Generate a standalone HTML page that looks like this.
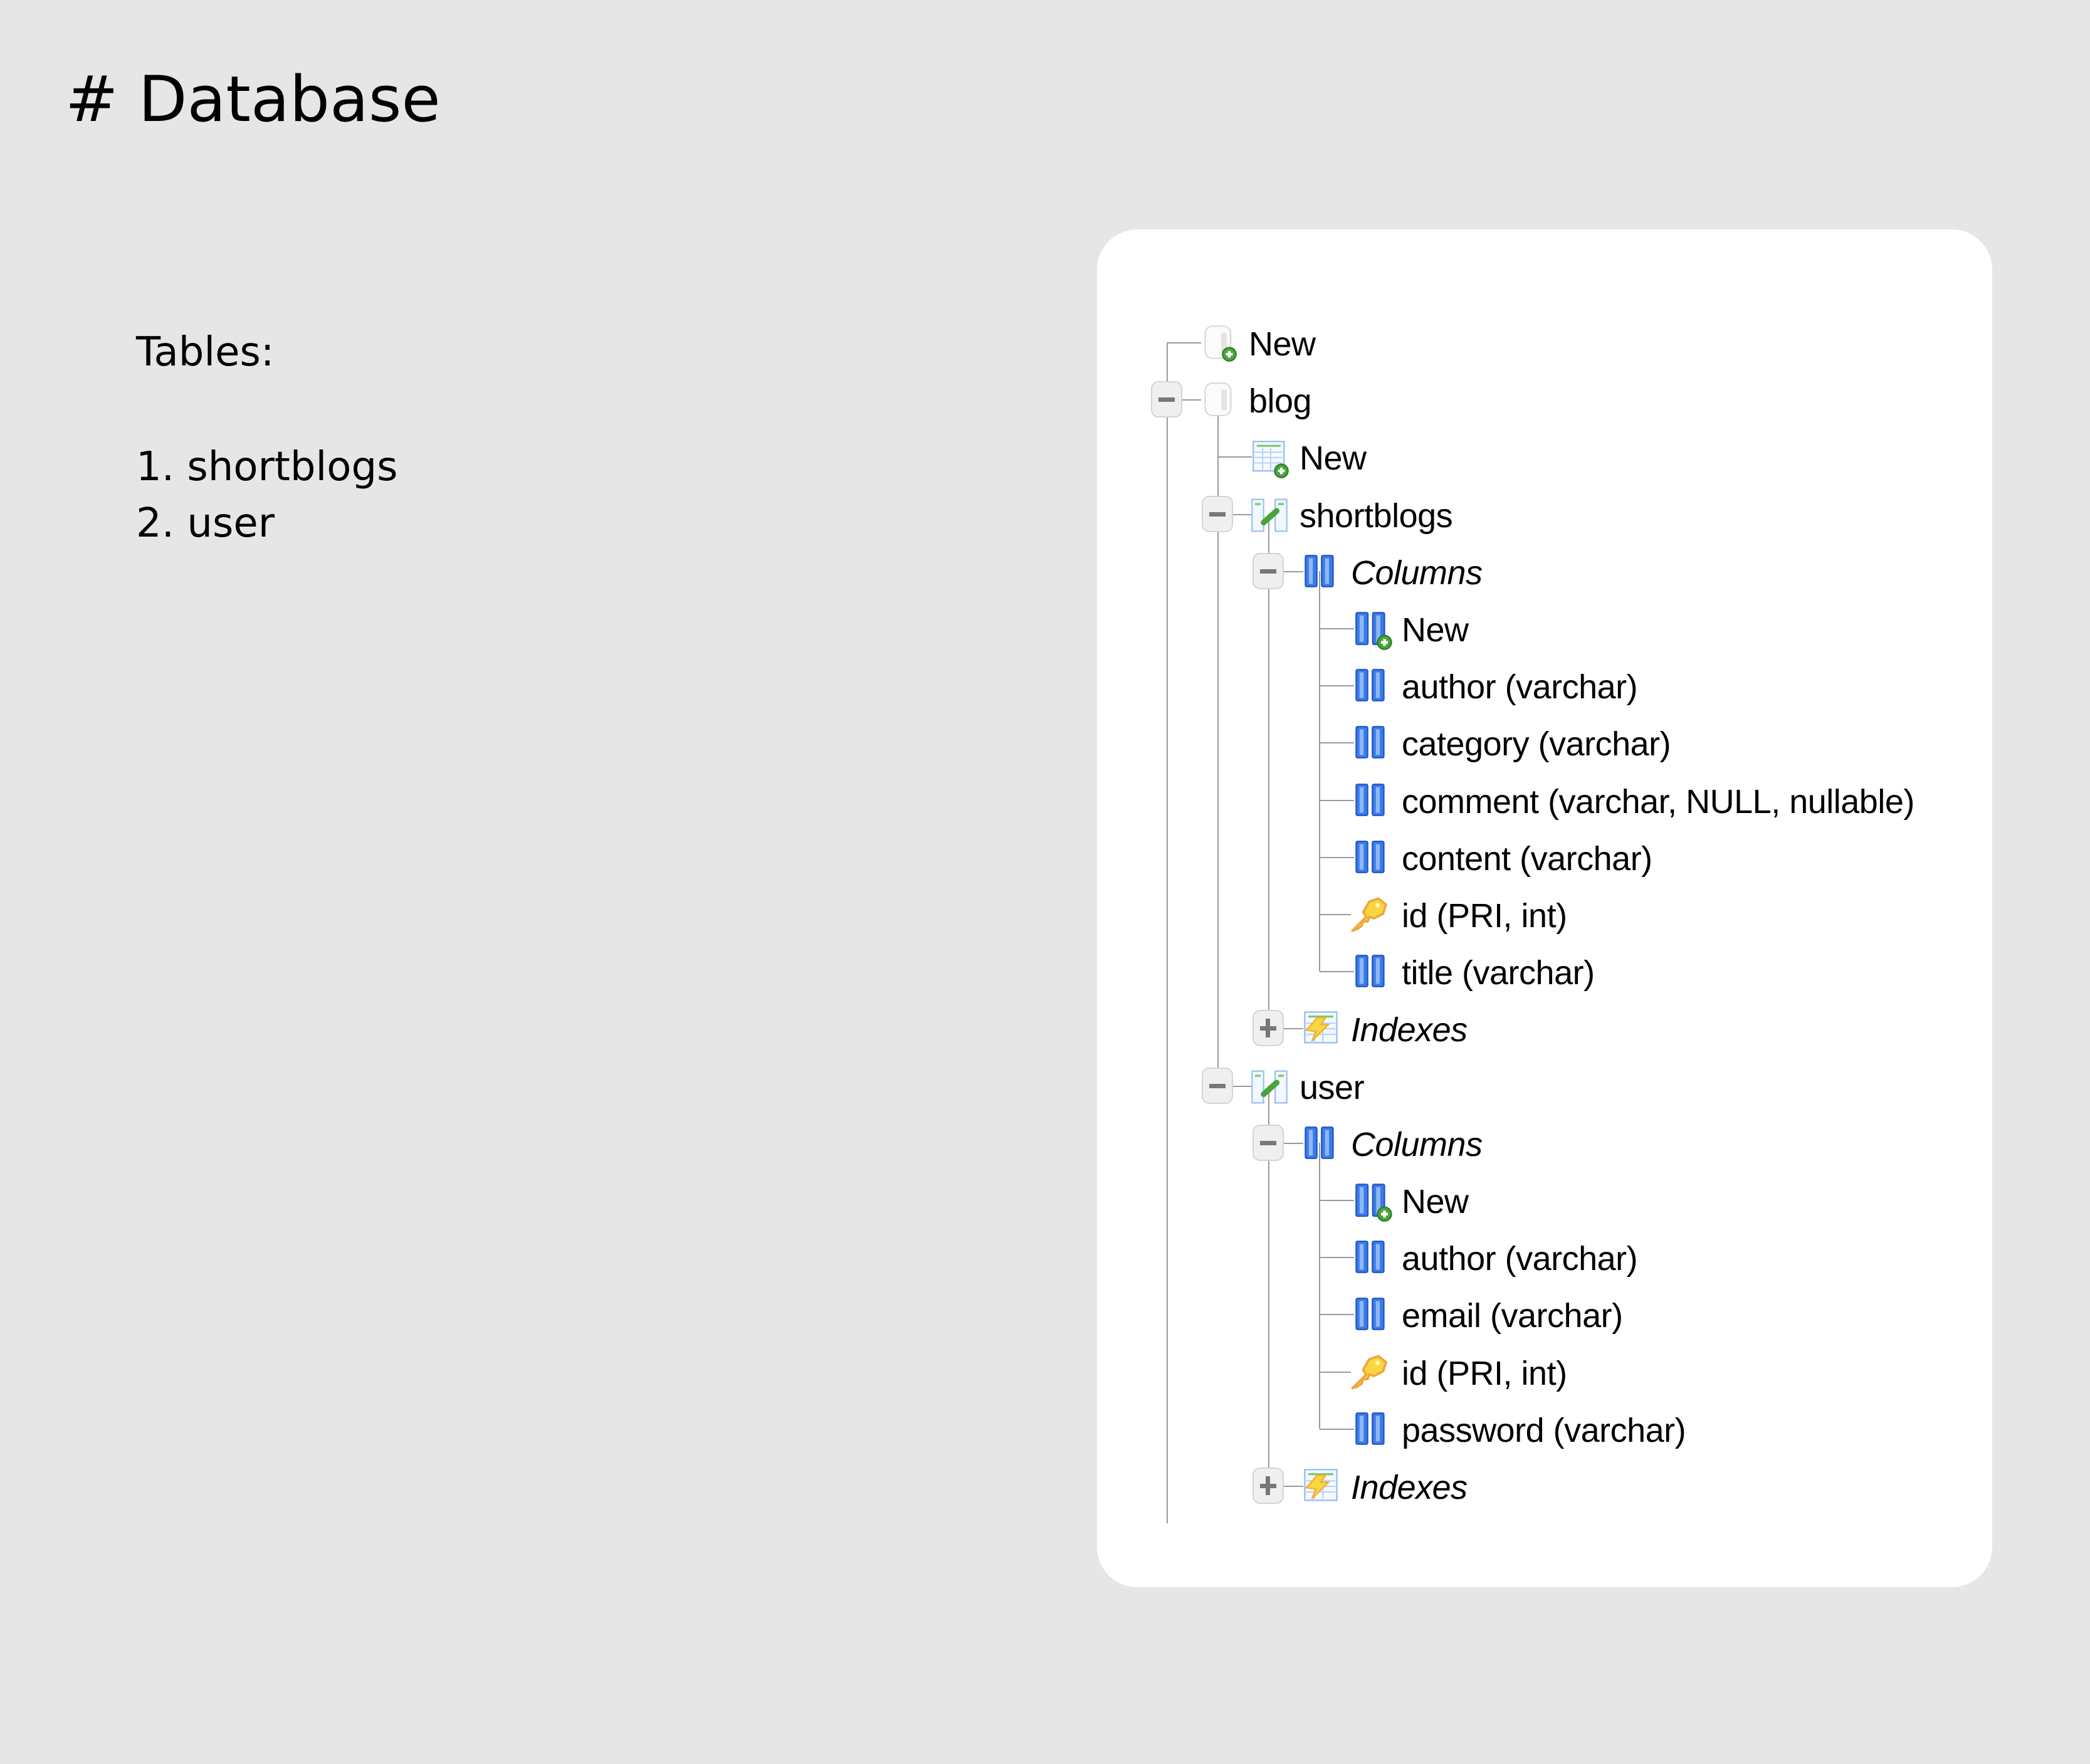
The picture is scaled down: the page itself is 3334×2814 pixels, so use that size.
<!DOCTYPE html>
<html><head><meta charset="utf-8">
<style>
html,body{margin:0;padding:0}
body{width:3334px;height:2814px;background:#e6e6e6;position:relative;overflow:hidden;font-family:"DejaVu Sans",sans-serif;color:#000}
.h1{position:absolute;left:104px;top:108px;font-size:101px;line-height:1;white-space:nowrap}
.p{position:absolute;font-size:64px;line-height:1;white-space:nowrap}
.card{position:absolute;left:1750px;top:366px;width:1428px;height:2166px;background:#fff;border-radius:64px}
.t{position:absolute;font-family:"Liberation Sans",sans-serif;font-size:54px;line-height:1;white-space:nowrap;letter-spacing:-0.5px}
.i{font-style:italic}
.v{position:absolute;width:2px;background:#9a9a9a}
.hz{position:absolute;height:2px;background:#9a9a9a}
.ex{position:absolute;width:50px;height:58px;border:2px solid #d4d4d4;border-radius:12px;background:#efefef;box-sizing:border-box}
.ex:before{content:"";position:absolute;left:10px;right:10px;top:24px;height:7px;background:#777}
.ex.pl:after{content:"";position:absolute;top:12px;bottom:12px;left:19px;width:7px;background:#777}
svg{position:absolute}
</style></head><body>
<div class="h1"># Database</div>
<div class="p" style="left:217px;top:530px">Tables:</div>
<div class="p" style="left:217px;top:713px">1. shortblogs</div>
<div class="p" style="left:217px;top:803px">2. user</div>

<div class="card"></div>

<div class="v" style="left:1861px;top:546px;height:1884px"></div>
<div class="v" style="left:1942px;top:637px;height:1095px"></div>
<div class="v" style="left:2023px;top:820px;height:820px"></div>
<div class="v" style="left:2104px;top:911px;height:638px"></div>
<div class="v" style="left:2023px;top:1732px;height:638px"></div>
<div class="v" style="left:2104px;top:1823px;height:456px"></div>

<div class="hz" style="left:1862px;top:546px;width:54px"></div>
<div class="hz" style="left:1862px;top:637px;width:54px"></div>
<div class="hz" style="left:1943px;top:728px;width:54px"></div>
<div class="hz" style="left:1943px;top:820px;width:54px"></div>
<div class="hz" style="left:2024px;top:911px;width:55px"></div>
<div class="hz" style="left:2105px;top:1002px;width:55px"></div>
<div class="hz" style="left:2105px;top:1093px;width:55px"></div>
<div class="hz" style="left:2105px;top:1184px;width:55px"></div>
<div class="hz" style="left:2105px;top:1276px;width:55px"></div>
<div class="hz" style="left:2105px;top:1367px;width:55px"></div>
<div class="hz" style="left:2105px;top:1458px;width:50px"></div>
<div class="hz" style="left:2105px;top:1549px;width:55px"></div>
<div class="hz" style="left:2024px;top:1640px;width:55px"></div>
<div class="hz" style="left:1943px;top:1732px;width:54px"></div>
<div class="hz" style="left:2024px;top:1823px;width:55px"></div>
<div class="hz" style="left:2105px;top:1914px;width:55px"></div>
<div class="hz" style="left:2105px;top:2005px;width:55px"></div>
<div class="hz" style="left:2105px;top:2096px;width:55px"></div>
<div class="hz" style="left:2105px;top:2188px;width:50px"></div>
<div class="hz" style="left:2105px;top:2279px;width:55px"></div>
<div class="hz" style="left:2024px;top:2370px;width:55px"></div>

<div class="ex" style="left:1836px;top:608px"></div>
<div class="ex" style="left:1917px;top:791px"></div>
<div class="ex" style="left:1998px;top:882px"></div>
<div class="ex pl" style="left:1998px;top:1611px"></div>
<div class="ex" style="left:1917px;top:1703px"></div>
<div class="ex" style="left:1998px;top:1794px"></div>
<div class="ex pl" style="left:1998px;top:2341px"></div>

<svg width="0" height="0" style="position:absolute">
<defs>
<g id="db"><rect x="6" y="2" width="38" height="48" rx="11" fill="#fbfbfb" stroke="#d8d8d8" stroke-width="2"/><rect x="30" y="12" width="8" height="30" fill="#e4e4e4"/></g>
<g id="plus"><circle cx="0" cy="0" r="10" fill="#4aa43a" stroke="#2f7d26" stroke-width="2"/><rect x="-5" y="-2" width="10" height="4" fill="#fff"/><rect x="-2" y="-5" width="4" height="10" fill="#fff"/></g>
<g id="col"><rect x="3" y="3" width="17" height="46" rx="2" fill="#3a7be8" stroke="#1f55c8" stroke-width="2"/><rect x="27" y="3" width="17" height="46" rx="2" fill="#3a7be8" stroke="#1f55c8" stroke-width="2"/><rect x="8" y="7" width="6" height="38" fill="#8fb7f5"/><rect x="32" y="7" width="6" height="38" fill="#8fb7f5"/></g>
<g id="tbl"><rect x="2" y="4" width="16" height="44" fill="#f3f8ff" stroke="#9cc3f0" stroke-width="2"/><rect x="34" y="4" width="16" height="44" fill="#f3f8ff" stroke="#9cc3f0" stroke-width="2"/><rect x="6" y="9" width="8" height="3" fill="#7ccb6a"/><rect x="38" y="9" width="8" height="3" fill="#7ccb6a"/><path d="M18 36 L36 20" stroke="#4aa43a" stroke-width="8" stroke-linecap="round"/></g>
<g id="grid"><rect x="4" y="4" width="46" height="44" fill="#f5f9ff" stroke="#8fbcf0" stroke-width="2"/><rect x="9" y="9" width="36" height="3" fill="#7ccb6a"/><path d="M6 20H48M6 28H48M6 36H48M18 14V46M30 14V46" stroke="#b9d5f5" stroke-width="2"/></g>
<g id="key"><path d="M6 48 L24 30 L20 24 L28 10 L40 6 L50 14 L46 26 L34 32 L28 30 L26 36 L20 36 L18 42 L12 46Z" fill="#f8d640" stroke="#f0a640" stroke-width="3" stroke-linejoin="round"/><circle cx="39" cy="15" r="3" fill="#fff6b0"/></g>
</defs></svg>

<svg style="left:1916px;top:518px" width="60" height="60" viewBox="0 0 56 56"><use href="#db"/><use href="#plus" x="42" y="44"/></svg>
<svg style="left:1916px;top:609px" width="56" height="56" viewBox="0 0 52 52"><use href="#db"/></svg>
<svg style="left:1995px;top:700px" width="64" height="64" viewBox="0 0 60 60"><use href="#grid"/><use href="#plus" x="46" y="48"/></svg>
<svg style="left:1995px;top:792px" width="60" height="60" viewBox="0 0 52 52"><use href="#tbl"/></svg>
<svg style="left:2079px;top:883px" width="52" height="56" viewBox="0 0 48 52"><use href="#col"/></svg>
<svg style="left:2160px;top:974px" width="64" height="64" viewBox="0 0 58 58"><use href="#col"/><use href="#plus" x="44" y="46"/></svg>
<svg style="left:2160px;top:1065px" width="52" height="56" viewBox="0 0 48 52"><use href="#col"/></svg>
<svg style="left:2160px;top:1156px" width="52" height="56" viewBox="0 0 48 52"><use href="#col"/></svg>
<svg style="left:2160px;top:1248px" width="52" height="56" viewBox="0 0 48 52"><use href="#col"/></svg>
<svg style="left:2160px;top:1339px" width="52" height="56" viewBox="0 0 48 52"><use href="#col"/></svg>
<svg style="left:2150px;top:1426px" width="66" height="66" viewBox="0 0 54 54"><use href="#key"/></svg>
<svg style="left:2160px;top:1521px" width="52" height="56" viewBox="0 0 48 52"><use href="#col"/></svg>
<svg style="left:2077px;top:1610px" width="60" height="60" viewBox="0 0 54 54"><use href="#grid"/><path d="M6 30 L22 12 L34 12 L27 22 L38 22 L14 46 L20 32Z" fill="#f8d640" stroke="#f0b030" stroke-width="2"/></svg>
<svg style="left:1995px;top:1704px" width="60" height="60" viewBox="0 0 52 52"><use href="#tbl"/></svg>
<svg style="left:2079px;top:1795px" width="52" height="56" viewBox="0 0 48 52"><use href="#col"/></svg>
<svg style="left:2160px;top:1886px" width="64" height="64" viewBox="0 0 58 58"><use href="#col"/><use href="#plus" x="44" y="46"/></svg>
<svg style="left:2160px;top:1977px" width="52" height="56" viewBox="0 0 48 52"><use href="#col"/></svg>
<svg style="left:2160px;top:2068px" width="52" height="56" viewBox="0 0 48 52"><use href="#col"/></svg>
<svg style="left:2150px;top:2156px" width="66" height="66" viewBox="0 0 54 54"><use href="#key"/></svg>
<svg style="left:2160px;top:2251px" width="52" height="56" viewBox="0 0 48 52"><use href="#col"/></svg>
<svg style="left:2077px;top:2340px" width="60" height="60" viewBox="0 0 54 54"><use href="#grid"/><path d="M6 30 L22 12 L34 12 L27 22 L38 22 L14 46 L20 32Z" fill="#f8d640" stroke="#f0b030" stroke-width="2"/></svg>

<div class="t" style="left:1992px;top:522px">New</div>
<div class="t" style="left:1992px;top:613px">blog</div>
<div class="t" style="left:2073px;top:704px">New</div>
<div class="t" style="left:2073px;top:796px">shortblogs</div>
<div class="t i" style="left:2155px;top:887px">Columns</div>
<div class="t" style="left:2236px;top:978px">New</div>
<div class="t" style="left:2236px;top:1069px">author (varchar)</div>
<div class="t" style="left:2236px;top:1160px">category (varchar)</div>
<div class="t" style="left:2236px;top:1252px">comment (varchar, NULL, nullable)</div>
<div class="t" style="left:2236px;top:1343px">content (varchar)</div>
<div class="t" style="left:2236px;top:1434px">id (PRI, int)</div>
<div class="t" style="left:2236px;top:1525px">title (varchar)</div>
<div class="t i" style="left:2155px;top:1616px">Indexes</div>
<div class="t" style="left:2073px;top:1708px">user</div>
<div class="t i" style="left:2155px;top:1799px">Columns</div>
<div class="t" style="left:2236px;top:1890px">New</div>
<div class="t" style="left:2236px;top:1981px">author (varchar)</div>
<div class="t" style="left:2236px;top:2072px">email (varchar)</div>
<div class="t" style="left:2236px;top:2164px">id (PRI, int)</div>
<div class="t" style="left:2236px;top:2255px">password (varchar)</div>
<div class="t i" style="left:2155px;top:2346px">Indexes</div>
</body></html>
